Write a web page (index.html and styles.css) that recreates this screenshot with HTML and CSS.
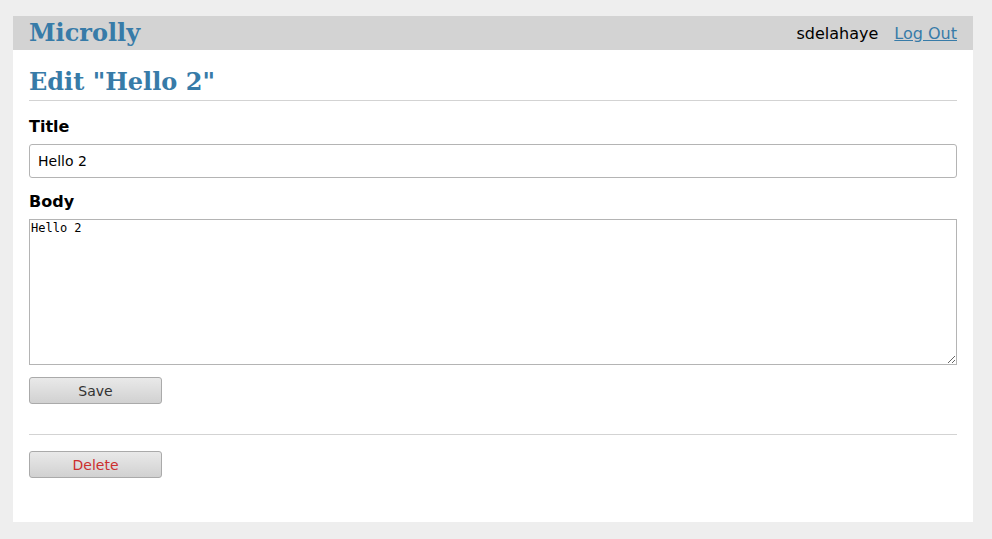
FILE: index.html
```html
<!DOCTYPE html>
<html lang="en">
<head>
  <meta charset="UTF-8">
  <title>Edit "Hello 2" - Microlly</title>
  <link rel="stylesheet" href="styles.css">
</head>
<body>

<nav>
  <h1><a href="/">Microlly</a></h1>
  <ul>
    <li><span>sdelahaye</span></li>
    <li><a href="/auth/logout">Log Out</a></li>
  </ul>
</nav>

<section class="content">
  <header>
    <h1>Edit "Hello 2"</h1>
  </header>

  <form method="post" class="edit">
    <label for="title">Title</label>
    <input name="title" id="title" value="Hello 2">
    <label for="body">Body</label>
    <textarea name="body" id="body">Hello 2</textarea>
    <input type="submit" value="Save">
  </form>
  <hr>
  <form method="post" class="remove">
    <input class="danger" type="submit" value="Delete">
  </form>
</section>

</body>
</html>
```

FILE: styles.css
```css
html { font-family: "DejaVu Sans", sans-serif; background: #eee; margin: 0; padding: 16px 0 17px; }
body { width: 960px; height: 506px; margin: 0 0 0 13px; background: white; }
h1 { font-family: "DejaVu Serif", serif; color: #377ba8; font-size: 24px; }
a { color: #377ba8; }
hr { border: none; border-top: 1px solid lightgray; margin: 0; }

nav { background: lightgray; display: flex; align-items: center; height: 34px; padding: 0 16px; }
nav h1 { flex: auto; margin: 0; line-height: 34px; }
nav h1 a { text-decoration: none; }
nav ul { display: flex; list-style: none; margin: 0; padding: 0; font-size: 16px; gap: 16px; }

.content { padding: 0 16px; }
.content > header { border-bottom: 1px solid lightgray; }
.content > header h1 { margin: 0; padding: 17px 0 3px; line-height: 30px; }

.content form { display: flex; flex-direction: column; }
.edit { padding-top: 16px; }
.content label { font-weight: bold; font-size: 16px; line-height: 20px; margin-bottom: 7px; }
#title { height: 34px; box-sizing: border-box; border: 1px solid #b4b4b4; border-radius: 3px; padding: 0 8px; font: 14px "DejaVu Sans", sans-serif; margin-bottom: 14px; outline: none; }
.content textarea { height: 146px; box-sizing: border-box; border: 1px solid #b4b4b4; padding: 1px; font: 12px/15px "DejaVu Sans Mono", monospace; resize: both; margin-bottom: 12px; outline: none; }

input[type=submit] { align-self: start; width: 133px; height: 27px; box-sizing: border-box; border: 1px solid #aaa; border-radius: 3px; background: linear-gradient(#e9e9e9, #d1d1d1); color: #333; font: 14px "DejaVu Sans", sans-serif; padding: 0; }
.edit input[type=submit] { margin-bottom: 30px; }
.remove { padding-top: 16px; }
input.danger { color: #cc2f2e; }
```
